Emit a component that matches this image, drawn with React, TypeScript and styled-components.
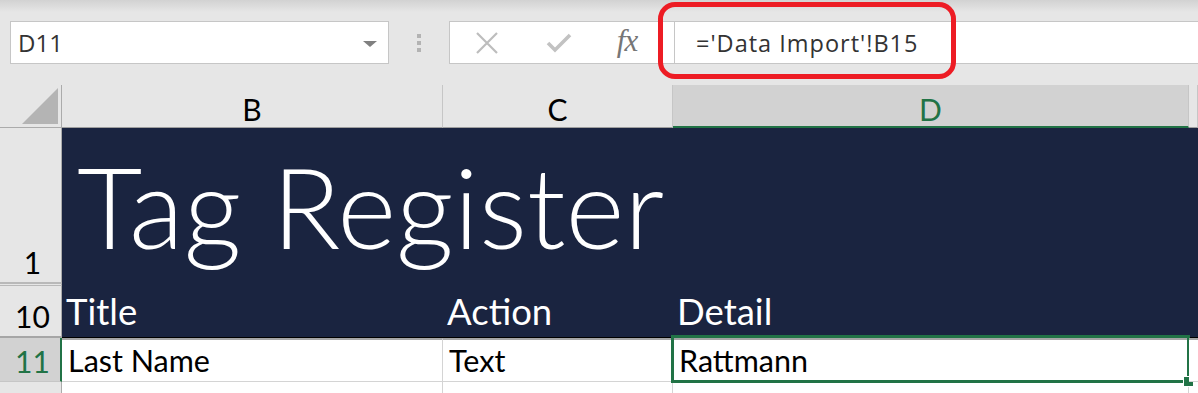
import React from "react";
import styled, { createGlobalStyle } from "styled-components";

const GlobalStyle = createGlobalStyle`
  html, body { margin: 0; padding: 0; background: #e6e6e6; overflow: hidden; }
  * { box-sizing: border-box; }
`;

const CELL_FONT = `"Lato", "Liberation Sans", sans-serif`;
const UI_FONT = `"Open Sans", "Liberation Sans", sans-serif`;
const GREEN = "#217346";
const NAVY = "#1a2440";

const Page = styled.div`
  width: 1198px;
  height: 393px;
  overflow: hidden;
  background: #e6e6e6;
`;

const FormulaBar = styled.div`
  position: relative;
  height: 85px;
  padding-top: 21px;
  display: flex;
  align-items: flex-start;
  background: linear-gradient(#d2d2d2 0px, #e6e6e6 12px);
`;

const NameBox = styled.div`
  margin-left: 10px;
  width: 379px;
  height: 43px;
  background: #fff;
  border: 1px solid #c6c6c6;
  display: flex;
  align-items: center;
  justify-content: space-between;
  padding: 0 11px 0 7px;
  font-family: ${UI_FONT};
  font-size: 24px;
  color: #333;
`;

const Caret = styled.span`
  width: 0;
  height: 0;
  border-left: 7px solid transparent;
  border-right: 7px solid transparent;
  border-top: 6px solid #808080;
  margin-top: 2px;
`;

const Grip = styled.div`
  width: 60px;
  height: 43px;
  display: flex;
  flex-direction: column;
  align-items: center;
  justify-content: center;
  gap: 3px;
  padding-top: 1px;
`;

const GripDot = styled.span`
  width: 4px;
  height: 4px;
  background: #b3b3b3;
`;

const Buttons = styled.div`
  width: 225px;
  height: 43px;
  background: #fff;
  border: 1px solid #c6c6c6;
  border-right: none;
  display: flex;
  align-items: center;
`;

const IconSlot = styled.div<{ $w: number }>`
  width: ${(p) => p.$w}px;
  height: 100%;
  display: flex;
  align-items: center;
  justify-content: center;
`;

const Fx = styled.span`
  font-family: "Liberation Serif", "DejaVu Serif", serif;
  font-style: italic;
  font-size: 31px;
  color: #767676;
  letter-spacing: -1px;
  margin-top: -4px;
`;

const FormulaInput = styled.div`
  flex: 1;
  height: 43px;
  background: #fff;
  border: 1px solid #c6c6c6;
  border-right: none;
  display: flex;
  align-items: center;
  padding-left: 21px;
  font-family: ${UI_FONT};
  font-size: 23.5px;
  letter-spacing: 1px;
  color: #333;
`;

const Highlight = styled.div`
  position: absolute;
  left: 658px;
  top: 2px;
  width: 298px;
  height: 77px;
  border: 5px solid #ed1c24;
  border-radius: 17px;
  pointer-events: none;
`;

const Sheet = styled.div`
  display: grid;
  grid-template-columns: 62px 381px 230px 516px 1fr;
  grid-template-rows: 43px 155px 3px 52px 44px 20px;
`;

const Corner = styled.div`
  position: relative;
  border-right: 1px solid #ababab;
  border-bottom: 1px solid #ababab;
  display: flex;
  align-items: flex-end;
  justify-content: flex-end;
  padding: 0 3px 3px 0;
`;

const CornerTri = styled.div`
  width: 36px;
  height: 36px;
  background: #b4b4b4;
  clip-path: polygon(100% 0, 100% 100%, 0 100%);
`;

const ColHeader = styled.div<{ $active?: boolean }>`
  background: ${(p) => (p.$active ? "#d2d2d2" : "#e6e6e6")};
  border-right: 1px solid #c6c6c6;
  border-bottom: ${(p) => (p.$active ? `2px solid ${GREEN}` : "1px solid #9e9e9e")};
  display: flex;
  align-items: center;
  justify-content: center;
  font-family: ${CELL_FONT};
  font-size: 30px;
  padding-top: 6px;
  color: ${(p) => (p.$active ? GREEN : "#000")};
`;

const RowHeader = styled.div<{ $active?: boolean; $bottom?: string }>`
  background: ${(p) => (p.$active ? "#d2d2d2" : "#e6e6e6")};
  border-right: ${(p) => (p.$active ? `2px solid ${GREEN}` : "1px solid #ababab")};
  border-bottom: ${(p) => p.$bottom || "1px solid #c6c6c6"};
  display: flex;
  align-items: flex-end;
  justify-content: center;
  padding-bottom: 5px;
  padding-left: ${(p) => (p.$active ? "5px" : "4px")};
  font-family: ${CELL_FONT};
  font-size: 30px;
  line-height: 1;
  color: ${(p) => (p.$active ? GREEN : "#000")};
`;

const HiddenRows = styled.div`
  border-right: 1px solid #ababab;
  border-top: 1px solid #b9b9b9;
  border-bottom: 1px solid #b9b9b9;
  background: #e6e6e6;
`;

const Banner = styled.div<{ $span: string }>`
  grid-column: ${(p) => p.$span};
  background: ${NAVY};
  color: #fff;
  font-family: ${CELL_FONT};
  font-weight: 300;
  font-size: 113px;
  line-height: 1;
  display: flex;
  align-items: flex-end;
  padding: 0 0 21px 15px;
  white-space: nowrap;
`;

const HeadCell = styled.div`
  background: ${NAVY};
  border-bottom: 1px solid #000;
  color: #fff;
  font-family: ${CELL_FONT};
  font-size: 36.5px;
  line-height: 1;
  display: flex;
  align-items: flex-end;
  padding: 0 0 8px 4px;
  white-space: nowrap;
`;

const Cell = styled.div<{ $right?: boolean }>`
  position: relative;
  background: #fff;
  border-top: 2px solid #a6a6a6;
  border-right: ${(p) => (p.$right ? "1px solid #d4d4d4" : "none")};
  border-bottom: 1px solid #d4d4d4;
  color: #000;
  font-family: ${CELL_FONT};
  font-size: 30.5px;
  line-height: 1;
  display: flex;
  align-items: flex-end;
  padding: 0 0 6px 6px;
  white-space: nowrap;
`;

const EmptyCell = styled.div<{ $right?: boolean }>`
  background: #fff;
  border-right: ${(p) => (p.$right ? "1px solid #d4d4d4" : "none")};
`;

const Selection = styled.div`
  position: absolute;
  left: -2px;
  top: -5px;
  right: -1px;
  bottom: -2px;
  border: 3px solid ${GREEN};
  pointer-events: none;
`;

const FillHandle = styled.span`
  position: absolute;
  right: -6px;
  bottom: -6px;
  width: 9px;
  height: 9px;
  background: ${GREEN};
  outline: 1px solid #fff;
`;

const CancelIcon = () => (
  <svg width="24" height="24" viewBox="0 0 24 24">
    <path d="M2 2 L22 22 M22 2 L2 22" stroke="#bdbdbd" strokeWidth="2.2" fill="none" />
  </svg>
);

const EnterIcon = () => (
  <svg width="26" height="24" viewBox="0 0 26 24">
    <path d="M2 12 L9 19 L24 4" stroke="#c2c2c2" strokeWidth="3.6" fill="none" />
  </svg>
);

export default function App() {
  return (
    <Page>
      <GlobalStyle />
      <FormulaBar>
        <NameBox>
          <span>D11</span>
          <Caret />
        </NameBox>
        <Grip>
          <GripDot />
          <GripDot />
          <GripDot />
        </Grip>
        <Buttons>
          <IconSlot $w={74}>
            <CancelIcon />
          </IconSlot>
          <IconSlot $w={70}>
            <EnterIcon />
          </IconSlot>
          <IconSlot $w={66}>
            <Fx>fx</Fx>
          </IconSlot>
        </Buttons>
        <FormulaInput>='Data Import'!B15</FormulaInput>
        <Highlight />
      </FormulaBar>

      <Sheet>
        <Corner>
          <CornerTri />
        </Corner>
        <ColHeader>B</ColHeader>
        <ColHeader>C</ColHeader>
        <ColHeader $active>D</ColHeader>
        <ColHeader />

        <RowHeader $bottom="1px solid #b9b9b9">1</RowHeader>
        <Banner $span="2 / 6">Tag Register</Banner>

        <HiddenRows />
        <Banner $span="2 / 6" />

        <RowHeader $bottom="2px solid #a6a6a6">10</RowHeader>
        <HeadCell>Title</HeadCell>
        <HeadCell>Action</HeadCell>
        <HeadCell>Detail</HeadCell>
        <HeadCell />

        <RowHeader $active>11</RowHeader>
        <Cell $right>Last Name</Cell>
        <Cell>Text</Cell>
        <Cell>
          Rattmann
          <Selection>
            <FillHandle />
          </Selection>
        </Cell>
        <Cell />

        <RowHeader />
        <EmptyCell $right />
        <EmptyCell $right />
        <EmptyCell $right />
        <EmptyCell />
      </Sheet>
    </Page>
  );
}
